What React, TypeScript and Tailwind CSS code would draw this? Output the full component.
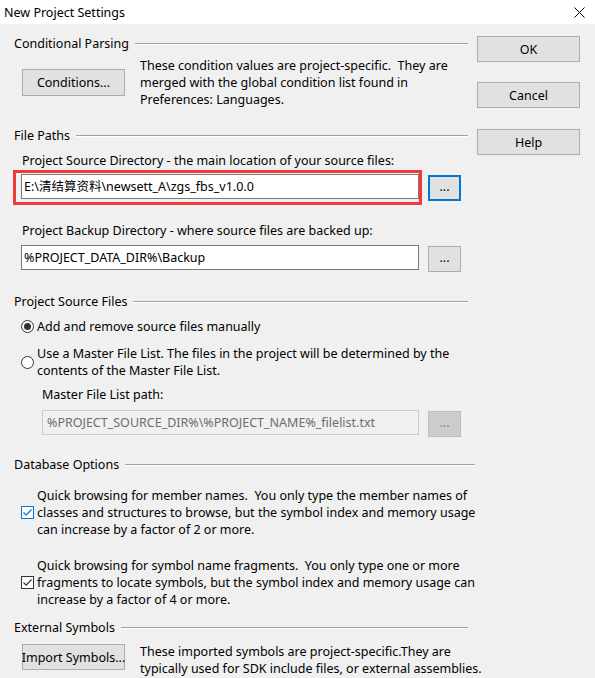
import React from "react";

const font = { fontFamily: '"Noto Sans", "Noto Sans CJK SC", sans-serif' };

function GroupHeader({ title, lineEnd = "mr-[7px]" }: { title: string; lineEnd?: string }) {
  return (
    <div className="flex h-[17px] items-center">
      <span className="whitespace-nowrap">{title}</span>
      <div className={`ml-[6px] flex-1 border-t border-[#a0a0a0] border-b border-b-white ${lineEnd}`} />
    </div>
  );
}

function WinButton({ children, className = "" }: { children: React.ReactNode; className?: string }) {
  return (
    <div
      className={`flex items-center justify-center whitespace-nowrap border border-[#adadad] bg-[#e1e1e1] text-black ${className}`}
    >
      {children}
    </div>
  );
}

function Radio({ checked }: { checked?: boolean }) {
  return (
    <div className="flex h-[13px] w-[13px] shrink-0 items-center justify-center rounded-full border border-[#333] bg-white">
      {checked ? <div className="h-[7px] w-[7px] rounded-full bg-[#333]" /> : null}
    </div>
  );
}

function Check({ focused }: { focused?: boolean }) {
  return (
    <div
      className={`flex h-[13px] w-[13px] shrink-0 items-center justify-center border bg-white ${
        focused ? "border-[#0078d7]" : "border-[#333]"
      }`}
    >
      <svg width="11" height="11" viewBox="0 0 11 11">
        <path d="M1.5 5.5 L4.2 8.2 L9.5 2.5" fill="none" stroke={focused ? "#0078d7" : "#333"} strokeWidth="1.2" />
      </svg>
    </div>
  );
}

export default function App() {
  return (
    <div className="h-[678px] w-[595px] overflow-hidden bg-[#f0f0f0] text-[12.5px] leading-[17px] text-black" style={font}>
      <div className="flex h-[24px] items-center justify-between bg-white pl-[4px] pr-[10px]">
        <span>New Project Settings</span>
        <svg width="11" height="11" viewBox="0 0 11 11">
          <path d="M0.5 0.5 L10.5 10.5 M10.5 0.5 L0.5 10.5" stroke="#000" strokeWidth="1" />
        </svg>
      </div>

      <div className="flex pl-[14px] pt-[11px]">
        <div className="w-[461px]">
          <GroupHeader title="Conditional Parsing" />
          <div className="mt-[5px] flex items-center">
            <WinButton className="ml-[8px] h-[27px] w-[103px]">Conditions...</WinButton>
            <p className="ml-[15px] w-[330px]">
              These condition values are project-specific.&nbsp; They are merged with the global condition list found in
              Preferences: Languages.
            </p>
          </div>

          <div className="mt-[19px]">
            <GroupHeader title="File Paths" />
          </div>
          <p className="ml-[8px] mt-[8px]">Project Source Directory - the main location of your source files:</p>
          <div className="relative ml-[7px] mt-[5px] flex items-start">
            <div className="flex h-[25px] w-[398px] items-center border border-[#7a7a7a] bg-white px-[2px]">
              E:\清结算资料\newsett_A\zgs_fbs_v1.0.0
            </div>
            <div className="ml-[9px] mt-[1px] flex h-[26px] w-[33px] items-center justify-center border-2 border-[#0078d7] bg-[#e1e1e1] pb-[4px]">
              ...
            </div>
            <div className="pointer-events-none absolute left-[-8px] top-[-4px] h-[35px] w-[409px] border-[3px] border-[#f03a3a]" />
          </div>

          <p className="ml-[8px] mt-[21px]">Project Backup Directory - where source files are backed up:</p>
          <div className="ml-[7px] mt-[6px] flex items-start">
            <div className="flex h-[25px] w-[398px] items-center border border-[#7a7a7a] bg-white px-[2px]">
              %PROJECT_DATA_DIR%\Backup
            </div>
            <WinButton className="ml-[9px] mt-[1px] h-[26px] w-[33px] pb-[4px]">...</WinButton>
          </div>

          <div className="mt-[21px]">
            <GroupHeader title="Project Source Files" />
          </div>
          <div className="ml-[7px] mt-[8px] flex items-center gap-[3px]">
            <Radio checked />
            <span>Add and remove source files manually</span>
          </div>
          <div className="ml-[7px] mt-[10px] flex items-center gap-[3px]">
            <Radio />
            <p className="w-[430px]">
              Use a Master File List. The files in the project will be determined by the contents of the Master File List.
            </p>
          </div>
          <p className="ml-[28px] mt-[7px]">Master File List path:</p>
          <div className="ml-[28px] mt-[7px] flex items-start">
            <div className="flex h-[25px] w-[377px] items-center border border-[#cccccc] bg-[#f0f0f0] px-[4px] text-[#6d6d6d]">
              %PROJECT_SOURCE_DIR%\%PROJECT_NAME%_filelist.txt
            </div>
            <div className="ml-[9px] mt-[1px] flex h-[26px] w-[33px] items-center justify-center border border-[#bfbfbf] bg-[#cccccc] pb-[4px] text-[#838383]">
              ...
            </div>
          </div>

          <div className="mt-[19px]">
            <GroupHeader title="Database Options" lineEnd="mr-0" />
          </div>
          <div className="ml-[7px] mt-[14px] flex items-center gap-[3px]">
            <Check focused />
            <p className="w-[452px] shrink-0">
              Quick browsing for member names.&nbsp; You only type the member names of classes and structures to browse,
              but the symbol index and memory usage can increase by a factor of 2 or more.
            </p>
          </div>
          <div className="ml-[7px] mt-[19px] flex items-center gap-[3px]">
            <Check />
            <p className="w-[452px] shrink-0">
              Quick browsing for symbol name fragments.&nbsp; You only type one or more fragments to locate symbols, but
              the symbol index and memory usage can increase by a factor of 4 or more.
            </p>
          </div>

          <div className="mt-[11px]">
            <GroupHeader title="External Symbols" />
          </div>
          <div className="mt-[7px] flex items-start">
            <WinButton className="ml-[8px] mt-[1px] h-[26px] w-[103px] shrink-0">Import Symbols...</WinButton>
            <p className="ml-[15px] w-[365px] shrink-0">
              These imported symbols are project-specific.They are
              <br />
              typically used for SDK include files, or external assemblies.
            </p>
          </div>
        </div>

        <div className="ml-[2px] flex w-[103px] flex-col pt-[1px]">
          <WinButton className="h-[26px]">OK</WinButton>
          <WinButton className="mt-[20px] h-[26px]">Cancel</WinButton>
          <WinButton className="mt-[21px] h-[26px]">Help</WinButton>
        </div>
      </div>
    </div>
  );
}
